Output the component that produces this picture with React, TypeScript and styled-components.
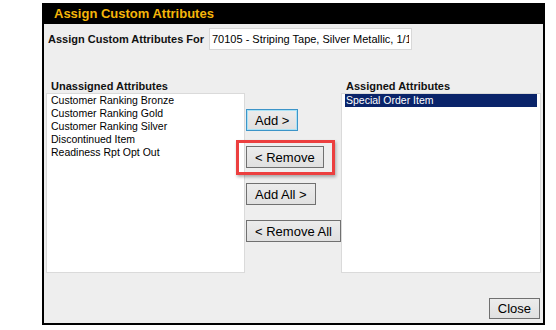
import React from 'react'
import styled, {createGlobalStyle, css} from 'styled-components'

const GlobalStyle = createGlobalStyle`
  body {
    margin: 0;
    background: #fff;
    font-family: 'Liberation Sans', Arial, sans-serif;
  }
`

const Page = styled.div`
  padding: 3px 0 0 42px;
`

const Dialog = styled.div`
  box-sizing: border-box;
  width: 503px;
  height: 322px;
  display: flex;
  flex-direction: column;
  background: #eeeeee;
  border: 2px solid #000;
  border-top: 0;
`

const TitleBar = styled.div`
  height: 21px;
  margin: 0 -2px;
  padding-left: 12px;
  display: flex;
  align-items: center;
  background: #000;
  color: #f5b50a;
  font-size: 13px;
  font-weight: bold;
`

const Body = styled.div`
  flex: 1;
  display: flex;
  flex-direction: column;
  padding: 4px 2px 4px 2px;
`

const ForRow = styled.div`
  display: flex;
  align-items: center;
  padding-left: 2px;
`

const Label = styled.div`
  font-size: 11px;
  font-weight: bold;
  color: #111;
`

const ForLabel = styled(Label)`
  width: 161px;
`

const TextInput = styled.input`
  box-sizing: border-box;
  width: 203px;
  height: 22px;
  padding: 0 2px;
  border: 1px solid #d8d8d8;
  background: #fff;
  font-family: 'Liberation Sans', Arial, sans-serif;
  font-size: 11px;
  color: #000;
  outline: none;
`

const Lists = styled.div`
  margin-top: 28px;
  display: grid;
  grid-template-columns: 199px 96px 200px;
  grid-template-rows: 15px 180px;
`

const ListLabel = styled(Label)`
  align-self: end;
  padding-left: 5px;
  line-height: 14px;
`

const ListBox = styled.div`
  box-sizing: border-box;
  height: 180px;
  padding: 0 3px;
  background: #fff;
  border: 1px solid #dadada;
`

const Item = styled.div<{$selected?: boolean}>`
  height: 13px;
  line-height: 13px;
  padding-left: 1px;
  font-size: 10.5px;
  color: #000;
  white-space: nowrap;
  ${p => p.$selected && css`
    background: #0a246a;
    color: #fff;
  `}
`

const ButtonCol = styled.div`
  position: relative;
  z-index: 1;
  display: flex;
  flex-direction: column;
  align-items: flex-start;
  gap: 15px;
  padding: 16px 0 0 1px;
`

const Button = styled.button<{$focused?: boolean}>`
  box-sizing: border-box;
  height: 22px;
  padding: 0 8px;
  background: linear-gradient(#ececec, #e0e0e0);
  border: 1px solid #707070;
  border-radius: 0;
  font-family: 'Liberation Sans', Arial, sans-serif;
  font-size: 13px;
  color: #000;
  white-space: nowrap;
  ${p => p.$focused && css`
    border-color: #3c94c8;
    box-shadow: inset 0 0 0 1px #a9e2f6;
  `}
`

const Marked = styled.div`
  position: relative;
`

const Highlight = styled.div`
  position: absolute;
  top: -6px;
  left: -10px;
  right: -11px;
  bottom: -7px;
  border: 3px solid #ec3f3f;
  box-shadow: 1px 2px 3px rgba(0, 0, 0, 0.3);
  pointer-events: none;
`

const Footer = styled.div`
  margin-top: auto;
  display: flex;
  justify-content: flex-end;
  padding-right: 1px;
`

const CloseButton = styled(Button)`
  height: 21px;
`

const unassigned = [
  'Customer Ranking Bronze',
  'Customer Ranking Gold',
  'Customer Ranking Silver',
  'Discontinued Item',
  'Readiness Rpt Opt Out',
]

const assigned = ['Special Order Item']

const App = () => (
  <Page>
    <GlobalStyle/>
    <Dialog>
      <TitleBar>{'Assign Custom Attributes'}</TitleBar>
      <Body>
        <ForRow>
          <ForLabel>{'Assign Custom Attributes For'}</ForLabel>
          <TextInput readOnly value='70105 - Striping Tape, Silver Metallic, 1/16" x 150 ft'/>
        </ForRow>
        <Lists>
          <ListLabel>{'Unassigned Attributes'}</ListLabel>
          <div/>
          <ListLabel>{'Assigned Attributes'}</ListLabel>
          <ListBox>
            {unassigned.map(name => <Item key={name}>{name}</Item>)}
          </ListBox>
          <ButtonCol>
            <Button $focused>{'Add >'}</Button>
            <Marked>
              <Button>{'< Remove'}</Button>
              <Highlight/>
            </Marked>
            <Button>{'Add All >'}</Button>
            <Button>{'< Remove All'}</Button>
          </ButtonCol>
          <ListBox>
            {assigned.map(name => <Item key={name} $selected>{name}</Item>)}
          </ListBox>
        </Lists>
        <Footer>
          <CloseButton>{'Close'}</CloseButton>
        </Footer>
      </Body>
    </Dialog>
  </Page>
)

export default App
